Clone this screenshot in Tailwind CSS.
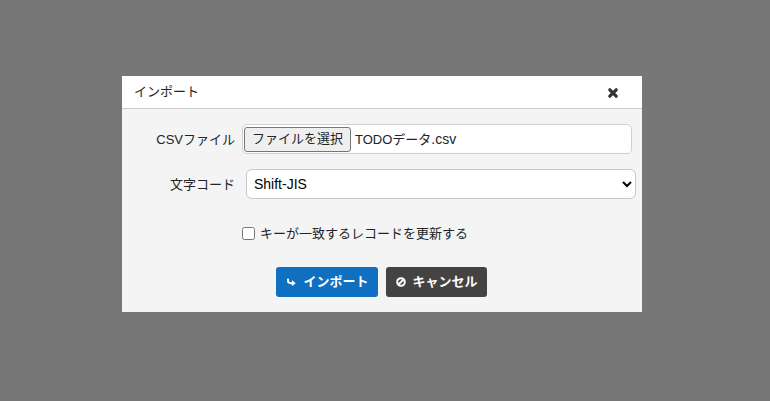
<!DOCTYPE html>
<html lang="ja"><head><meta charset="utf-8"><script src="https://cdn.jsdelivr.net/npm/@tailwindcss/browser@4"></script></head>
<body class="m-0">
<div class="w-[770px] h-[401px] bg-[#777777] overflow-hidden pt-[76px] pl-[122px] font-['Liberation_Sans','Noto_Sans_CJK_JP',sans-serif] text-[13px] text-[#212529]">
  <div class="w-[520px] h-[236px] bg-[#f4f4f4] flex flex-col">
    <div class="h-[33px] bg-white border-b border-[#cccccc] flex items-center justify-between pl-[12px] pr-[23px] shrink-0">
      <span class="leading-[28px] -mt-[1px]">インポート</span>
      <svg class="w-[12px] h-[12px] mt-[1px]" viewBox="0 0 12 12"><path d="M2.8 2.8 L9.2 9.2 M9.2 2.8 L2.8 9.2" stroke="#333" stroke-width="3.2" stroke-linecap="round"/></svg>
    </div>
    <div class="flex items-center mt-[15px] h-[30px]">
      <label class="w-[113px] text-right leading-none">CSVファイル</label>
      <div class="ml-[7px] w-[390px] h-[30px] bg-white border border-[#cfcfcf] rounded-[5px] flex items-center pl-[1px]">
        <span class="h-[25px] w-[107px] flex items-center justify-center bg-[#efefef] border border-[#767676] rounded-[3px]">ファイルを選択</span>
        <span class="ml-[4px]">TODOデータ<span class="text-[14px]">.csv</span></span>
      </div>
    </div>
    <div class="flex items-center mt-[15px] h-[30px]">
      <label class="w-[113px] text-right leading-none">文字コード</label>
      <select class="ml-[11px] w-[390px] h-[30px] bg-white border border-[#c8c8c8] rounded-[6px] pl-[3px] text-black text-[14px] appearance-auto"><option>Shift-JIS</option></select>
    </div>
    <label class="flex items-center mt-[25px] ml-[120px] h-[20px]">
      <input type="checkbox" class="w-[13px] h-[13px] appearance-auto m-0 -mt-[1px]">
      <span class="ml-[5px]">キーが一致するレコードを更新する</span>
    </label>
    <div class="flex justify-center items-center gap-[8px] mt-[23px] -ml-[2px]">
      <button class="w-[102px] h-[30px] bg-[#0f6fc0] rounded-[3px] text-white font-bold flex items-center pl-[10px]">
        <svg class="w-[11px] h-[11px] mr-[7px]" viewBox="0 0 10 10"><path d="M1.8 1.5 V3.5 Q1.8 5.6 4.5 5.6 H6" fill="none" stroke="white" stroke-width="1.8"/><path d="M5.4 2.8 L8.8 5.6 L5.4 8.4 Z" fill="white"/></svg>インポート
      </button>
      <button class="w-[101px] h-[30px] bg-[#444342] rounded-[3px] text-white font-bold flex items-center pl-[10px]">
        <svg class="w-[10px] h-[10px] mr-[7px]" viewBox="0 0 10 10"><circle cx="5" cy="5" r="3.8" fill="none" stroke="white" stroke-width="2"/><path d="M2.5 7.5 L7.5 2.5" stroke="white" stroke-width="1.8"/></svg>キャンセル
      </button>
    </div>
  </div>
</div>
</body></html>
